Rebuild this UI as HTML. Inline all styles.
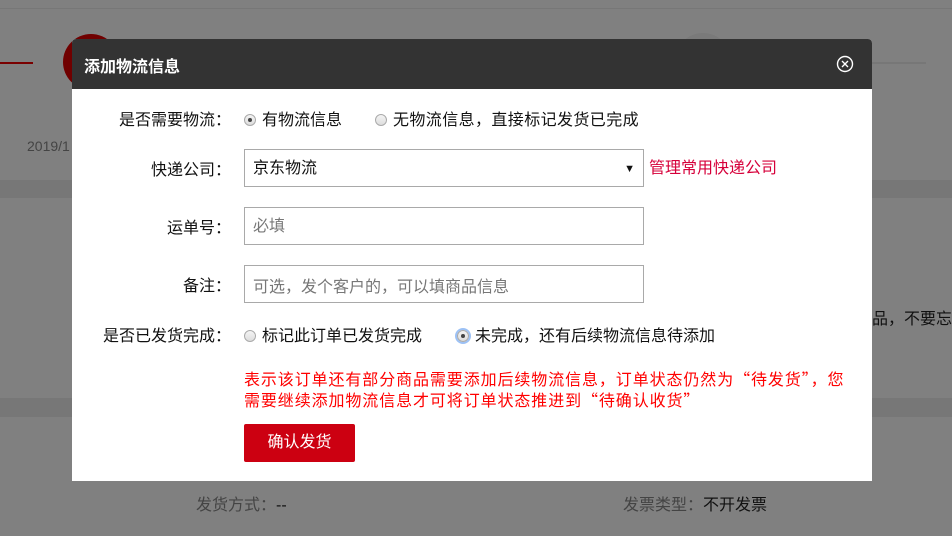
<!DOCTYPE html>
<html><head><meta charset="utf-8"><style>
*{margin:0;padding:0;box-sizing:border-box}
body{width:952px;height:536px;position:relative;overflow:hidden;background:#808080;font-family:"Liberation Sans","Noto Sans CJK SC",sans-serif;font-size:16px;color:#111}
.a{position:absolute;white-space:nowrap}
.lbl{position:absolute;right:721px;text-align:right;white-space:nowrap}
.radio{display:inline-block;width:12px;height:12px;border-radius:50%;border:1px solid #aaa;background:linear-gradient(#f4f4f4,#ddd);vertical-align:-1px;margin-right:6px;position:relative}
.radio.on::after{content:"";position:absolute;left:3px;top:3px;width:4px;height:4px;border-radius:50%;background:#444}
.box{position:absolute;left:244px;width:400px;height:38px;border:1px solid #a9a9a9;background:#fff;padding-left:8px;line-height:38px}
.cjk{font-family:"Noto Sans CJK SC",sans-serif}
</style></head><body>
<div class="a" style="left:0;top:8px;width:952px;height:1px;background:#777"></div>
<div class="a" style="left:0;top:62px;width:33px;height:2px;background:#7a0000"></div>
<div class="a" style="left:63px;top:34px;width:56px;height:56px;border-radius:50%;background:#700000"></div>
<div class="a" style="left:675px;top:33px;width:56px;height:56px;border-radius:50%;background:#7a7a7a"></div>
<div class="a" style="left:780px;top:62px;width:146px;height:2px;background:#777"></div>
<div class="a" style="left:27px;top:138px;color:#444;font-size:14px">2019/1</div>
<div class="a" style="left:0;top:180px;width:952px;height:18px;background:#777"></div>
<div class="a" style="left:0;top:398px;width:952px;height:19px;background:#777"></div>
<div class="a" style="left:872px;top:305px;color:#111">品，不要忘</div>
<div class="a" style="left:196px;top:491px;color:#444">发货方式：<span style="color:#111">--</span></div>
<div class="a" style="left:623px;top:491px;color:#444">发票类型：<span style="color:#111">不开发票</span></div>

<div class="a" style="left:72px;top:39px;width:800px;height:442px;background:#fff;border-radius:4px 4px 0 0">
 <div style="height:50px;background:#333;border-radius:4px 4px 0 0;position:relative">
  <div class="a" style="left:12px;top:14px;color:#fff;font-weight:bold;font-size:16px">添加物流信息</div>
  <svg class="a" style="left:764px;top:16px" width="18" height="18" viewBox="0 0 18 18"><circle cx="9" cy="9" r="7.5" fill="none" stroke="#fff" stroke-width="1.4"/><path d="M6 6L12 12M12 6L6 12" stroke="#fff" stroke-width="1.4"/></svg>
 </div>
</div>
<div class="lbl" style="top:106px">是否需要物流：</div>
<div class="a" style="left:244px;top:106px"><span class="radio on"></span>有物流信息</div>
<div class="a cjk" style="left:375px;top:106px;letter-spacing:0.4px"><span class="radio"></span>无物流信息，直接标记发货已完成</div>

<div class="lbl" style="top:156px">快递公司：</div>
<div class="box" style="top:149px">京东物流<span style="position:absolute;right:8px;top:0;font-size:11px">▼</span></div>
<div class="a" style="left:649px;top:154px;color:#d6003a">管理常用快递公司</div>

<div class="lbl" style="top:214px">运单号：</div>
<div class="box" style="top:207px;color:#777">必填</div>
<div class="lbl" style="top:272px">备注：</div>
<div class="box cjk" style="top:265px;color:#777">可选，发个客户的，可以填商品信息</div>

<div class="lbl" style="top:322px">是否已发货完成：</div>
<div class="a" style="left:244px;top:322px"><span class="radio"></span>标记此订单已发货完成</div>
<div class="a cjk" style="left:457px;top:322px"><span class="radio on" style="box-shadow:0 0 0 2px #9cc1f5"></span>未完成，还有后续物流信息待添加</div>

<div class="a cjk" style="left:244px;top:368px;color:#f00;line-height:21px;letter-spacing:0.9px">表示该订单还有部分商品需要添加后续物流信息，订单状态仍然为“待发货”，您<br>需要继续添加物流信息才可将订单状态推进到“待确认收货”</div>
<div class="a" style="left:244px;top:424px;width:111px;height:38px;background:#cc0011;border-radius:2px;color:#fff;text-align:center;line-height:38px">确认发货</div>
</body></html>
